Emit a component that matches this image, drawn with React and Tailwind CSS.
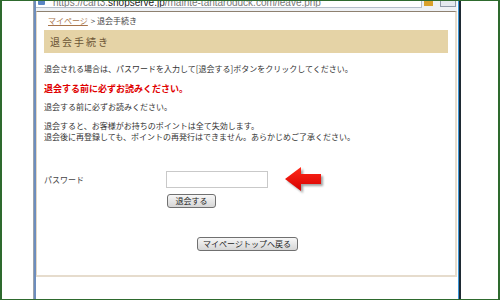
function AddressBar() {
  return (
    <div className="flex h-[10px] items-start bg-[#eef1f5]">
      <div className="flex h-[7px] w-[386px] items-end overflow-hidden border-r border-b border-[#b4bdc9] bg-white">
        <div className="mb-[2px] ml-[2px] h-[5px] w-[7px] rounded-[1px] bg-[#5a86c4]" />
        <span className="mb-[-1px] ml-[8px] whitespace-nowrap font-['Liberation_Sans',sans-serif] text-[10px] leading-[10px] text-[#777]">
          https://cart3.<span className="text-[#222]">shopserve.jp</span>/mainte-tantaroduck.com/leave.php
        </span>
      </div>
      <div className="ml-[2px] h-[5px] w-[9px] bg-[#d9a12c]" />
      <div className="ml-[7px] h-[6px] w-[16px] border-r border-b border-l border-[#8f9aa8] bg-[#e4e9ef]" />
    </div>
  );
}

function Arrow() {
  return (
    <svg width="44" height="32" viewBox="0 0 44 32" className="my-[-8px] ml-[15px] shrink-0">
      <defs>
        <linearGradient id="arr" x1="0" y1="0" x2="0" y2="1">
          <stop offset="0" stopColor="#ff2a1a" />
          <stop offset="1" stopColor="#d60000" />
        </linearGradient>
        <filter id="blur" x="-20%" y="-20%" width="140%" height="140%">
          <feGaussianBlur stdDeviation="1.2" />
        </filter>
      </defs>
      <path
        d="M2 15 L18 3 L18 10 L38 10 L38 20 L18 20 L18 27 Z"
        fill="#555"
        opacity="0.55"
        transform="translate(2 2)"
        filter="url(#blur)"
      />
      <path d="M2 15 L18 3 L18 10 L38 10 L38 20 L18 20 L18 27 Z" fill="url(#arr)" />
    </svg>
  );
}

function Button({ children, className = '' }) {
  return (
    <button
      type="button"
      className={`flex h-[14px] items-center justify-center rounded-[3px] border border-[#707070] bg-gradient-to-b from-[#f7f7f7] to-[#d6d6d6] text-[8px] leading-none text-[#222] ${className}`}
    >
      {children}
    </button>
  );
}

export default function App() {
  return (
    <div className="flex h-[300px] w-[500px] border-x-2 border-y border-[#2e6a2e] bg-white font-['Noto_Sans_CJK_JP',sans-serif] text-[#333]">
      <div className="w-[31px] shrink-0" />
      <div className="flex w-[428px] shrink-0 flex-col border-r-2 border-l border-r-[#1f2a33] border-l-[#9ca3ab]">
        <div className="flex flex-1 flex-col border-r border-l-2 border-r-[#3b95d6] border-l-[#6d8dbd] pr-[1px]">
          <AddressBar />
          <div className="flex h-[266px] flex-col border-t border-r-2 border-b-2 border-l border-t-[#8e8170] border-r-[#e6dccd] border-b-[#e6dccd] border-l-[#e3d7c6] bg-white">
            <div className="flex h-[18px] items-center pl-[11px] text-[8px] leading-none">
              <a className="text-[#a8744a] underline">マイページ</a>
              <span className="ml-[3px] text-[#444]">&gt;&nbsp;退会手続き</span>
            </div>
            <div className="mx-[7px] flex h-[23px] items-center bg-[#e5d3a6] pl-[6px]">
              <h1 className="text-[10px] leading-none tracking-[2px] text-[#6b5535]">退会手続き</h1>
            </div>

            <div className="pl-[7px] text-[8px] leading-[11px]">
              <p className="mt-[10px]">
                退会される場合は、パスワードを入力して[退会する]ボタンをクリックしてください。
              </p>
              <p className="mt-[9px] text-[9px] font-bold text-[#e00000]">
                退会する前に必ずお読みください。
              </p>
              <p className="mt-[7px]">退会する前に必ずお読みください。</p>
              <p className="mt-[8px]">退会すると、お客様がお持ちのポイントは全て失効します。</p>
              <p>退会後に再登録しても、ポイントの再発行はできません。あらかじめご了承ください。</p>

              <div className="mt-[29px] flex">
                <div className="flex h-[17px] w-[122px] items-center text-[#444]">パスワード</div>
                <div className="flex flex-col">
                  <div className="flex h-[17px] items-center">
                    <input
                      type="password"
                      className="h-[17px] w-[102px] border border-[#c9c9c9] bg-white outline-none"
                    />
                    <Arrow />
                  </div>
                  <Button className="mt-[6px] ml-[1px] w-[49px]">退会する</Button>
                </div>
              </div>

              <div className="mt-[29px] flex justify-center pr-[7px]">
                <Button className="ml-[2px] w-[101px]">マイページトップへ戻る</Button>
              </div>
            </div>
          </div>
          <div className="flex-1 bg-white" />
        </div>
      </div>
    </div>
  );
}
